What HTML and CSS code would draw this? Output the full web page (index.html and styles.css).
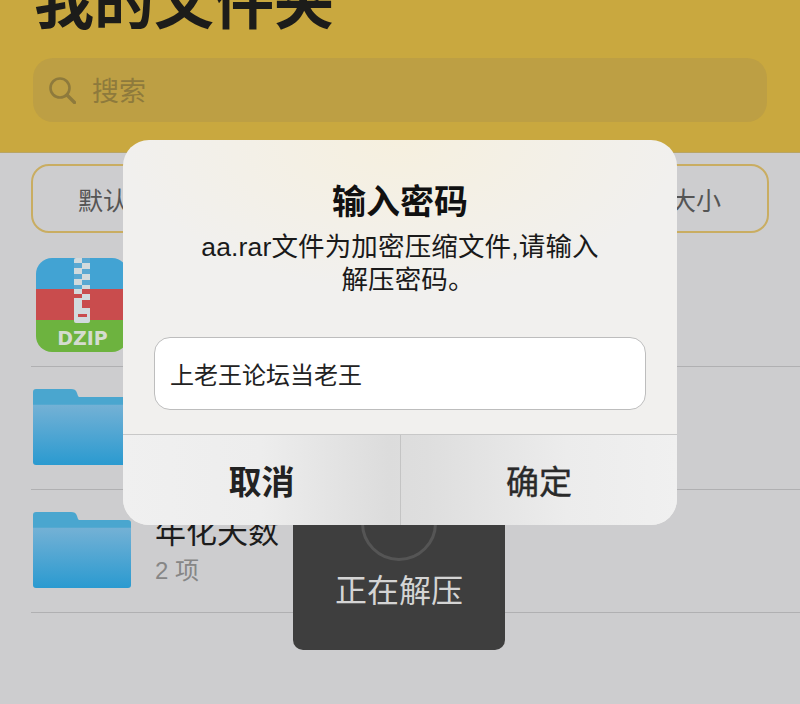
FILE: index.html
```html
<!DOCTYPE html>
<html lang="zh-CN">
<head>
  <meta charset="UTF-8">
  <title>我的文件夹</title>
  <link rel="stylesheet" href="styles.css">
</head>
<body>
  <div class="page">
    <header class="header">
      <h1 class="title">我的文件夹</h1>
      <div class="search">
        <svg class="search-icon" width="27" height="27" viewBox="0 0 27 27" fill="none" stroke="#8e7a3c">
          <circle cx="11" cy="11" r="9.5" stroke-width="2.6"/>
          <path d="M18 18l7.5 7.5" stroke-width="3.4" stroke-linecap="round"/>
        </svg>
        <span class="search-text">搜索</span>
      </div>
    </header>

    <div class="sort-bar">
      <span>默认</span>
      <span>大小</span>
    </div>

    <div class="file-list">
      <div class="file-row">
        <svg class="zip-icon" width="92" height="94" viewBox="0 0 92 94">
          <defs>
            <clipPath id="zip-clip"><rect width="92" height="94" rx="16"/></clipPath>
          </defs>
          <g clip-path="url(#zip-clip)">
            <rect width="92" height="32" fill="#42a3d3"/>
            <rect y="31" width="92" height="32" fill="#c94c4d"/>
            <rect y="62" width="92" height="32" fill="#6db33f"/>
            <rect x="38" width="16" height="65" rx="2" fill="#d2dadd"/>
            <path d="M46 0h8v5h-8zM38 5h8v5h-8zM46 11h8v5h-8zM38 16h8v5h-8zM46 22h8v5h-8zM38 27h8v4h-8z" fill="#5aa8d2"/>
            <path d="M46 31h8v5h-8zM38 36h8v4h-8zM46 42h8v5h-8z" fill="#c94c4d"/>
            <path d="M46 47h8v3h-8z" fill="#c94c4d"/>
            <rect x="42" y="56" width="9" height="3" fill="#c94c4d"/>
            <text class="zip-label" x="46.5" y="87" text-anchor="middle">DZIP</text>
          </g>
        </svg>
      </div>
      <div class="file-row">
        <svg class="folder-icon" width="98" height="76" viewBox="0 0 98 77" preserveAspectRatio="none">
          <use href="#folder-shape"/>
        </svg>
      </div>
      <div class="file-row">
        <svg class="folder-icon" width="98" height="76" viewBox="0 0 98 77" preserveAspectRatio="none">
          <defs>
            <linearGradient id="folder-front" x1="0" y1="0" x2="0" y2="1">
              <stop offset="0" stop-color="#74b1d5"/>
              <stop offset="1" stop-color="#2a9ad0"/>
            </linearGradient>
            <g id="folder-shape">
              <path d="M0 3a3 3 0 0 1 3-3h35c3 0 5 1 6 4l1 3c.4 1 1 1 2 1h48a3 3 0 0 1 3 3v10H0z" fill="#4aa6cf"/>
              <path d="M0 16h98v58a3 3 0 0 1-3 3H3a3 3 0 0 1-3-3z" fill="url(#folder-front)"/>
            </g>
          </defs>
          <use href="#folder-shape"/>
        </svg>
        <div class="file-info">
          <div class="file-name">年化天数</div>
          <div class="file-meta">2 项</div>
        </div>
      </div>
    </div>

    <div class="toast">
      <div class="spinner"></div>
      <div class="toast-text">正在解压</div>
    </div>

    <div class="dialog">
      <div class="dialog-body">
        <h2 class="dialog-title">输入密码</h2>
        <p class="dialog-message">aa.rar文件为加密压缩文件,请输入<br><span class="message-tail">解压密码。</span></p>
        <input class="dialog-input" type="text" value="上老王论坛当老王">
      </div>
      <div class="dialog-actions">
        <button class="dialog-btn cancel">取消</button>
        <button class="dialog-btn confirm">确定</button>
      </div>
    </div>
  </div>
</body>
</html>
```

FILE: styles.css
```css
* { box-sizing: border-box; }

body {
  margin: 0;
  font-family: "Liberation Sans", "Noto Sans CJK SC", sans-serif;
}

.page {
  position: relative;
  width: 800px;
  height: 704px;
  overflow: hidden;
  background-color: #cdcdcf;
}

.header {
  height: 153px;
  padding: 0 33px 30px;
  display: flex;
  flex-direction: column;
  justify-content: flex-end;
  background-color: #c9a83f;
  border-bottom: 1px solid #b9a564;
}

.title {
  margin: 0 0 19px 1px;
  font-size: 60px;
  line-height: 70px;
  font-weight: 700;
  color: #1c1c1a;
  white-space: nowrap;
}

.search {
  height: 64px;
  flex-shrink: 0;
  padding-left: 16px;
  display: flex;
  align-items: center;
  gap: 16px;
  background-color: #bd9f44;
  border-radius: 20px;
  font-size: 27px;
  color: #8e7a3c;
}

.search-text { margin-top: -2px; }

.sort-bar {
  height: 69px;
  margin: 11px 31px 0;
  padding: 0 46px 0 45px;
  display: flex;
  align-items: center;
  justify-content: space-between;
  border: 2px solid #c9ad62;
  border-radius: 18px;
  font-size: 25px;
  color: #555;
}

.file-list { margin: 11px 0 0 31px; }

.file-row {
  height: 123px;
  padding: 0 0 2px 2px;
  display: flex;
  align-items: center;
  gap: 24px;
  border-bottom: 1px solid #b0b0b2;
}

.zip-icon { margin: 2px 0 0 3px; }

.zip-label {
  font-family: "DejaVu Sans", sans-serif;
  font-size: 19px;
  font-weight: 700;
  fill: #d5dcd0;
}

.file-name {
  font-size: 31px;
  line-height: 40px;
  color: #1c1c1c;
}

.file-meta {
  margin-top: 2px;
  font-size: 24px;
  line-height: 32px;
  color: #868686;
}

.toast {
  position: absolute;
  left: 293px;
  top: 490px;
  width: 212px;
  height: 160px;
  display: flex;
  flex-direction: column;
  align-items: center;
  background-color: #3e3e3e;
  border-radius: 10px;
}

.spinner {
  width: 76px;
  height: 76px;
  margin-top: -5px;
  border: 3px solid #555;
  border-radius: 50%;
}

.toast-text {
  margin-top: 8px;
  font-size: 32px;
  line-height: 44px;
  color: #d4d4d4;
}

.dialog {
  position: absolute;
  left: 123px;
  top: 140px;
  width: 554px;
  height: 385px;
  display: flex;
  flex-direction: column;
  border-radius: 26px;
  overflow: hidden;
  background:
    radial-gradient(ellipse 280px 150px at 50% 0, #f6f0df 0%, rgba(246, 240, 223, 0) 100%),
    #f1f0ee;
}

.dialog-body {
  height: 295px;
  padding: 40px 31px 0;
  text-align: center;
  border-bottom: 1px solid #c8c8c8;
}

.dialog-title {
  margin: 0;
  font-size: 34px;
  line-height: 44px;
  font-weight: 700;
  color: #111;
}

.dialog-message {
  margin: 7px 0 0;
  font-size: 26.5px;
  line-height: 33px;
  letter-spacing: 0.15px;
  color: #1a1a1a;
}

.message-tail { padding-left: 16px; }

.dialog-input {
  display: block;
  width: 492px;
  height: 73px;
  margin-top: 40px;
  padding: 0 15px;
  border: 1px solid #bdbdbd;
  border-radius: 16px;
  background-color: #fff;
  font: 24px "Liberation Sans", "Noto Sans CJK SC", sans-serif;
  color: #222;
}

.dialog-actions {
  flex: 1;
  display: grid;
  grid-template-columns: 278px 1fr;
  background: linear-gradient(90deg, #f0f0f0 0%, #ededed 25%, #dcdcdc 48%, #dedede 55%, #ececec 80%, #f0f0f0 100%);
}

.dialog-btn {
  padding: 0;
  border: 0;
  background: none;
  font: 400 33px "Liberation Sans", "Noto Sans CJK SC", sans-serif;
  color: #2a2a2a;
}

.dialog-btn.confirm { -webkit-text-stroke: 0.4px #2a2a2a; }

.dialog-btn.cancel {
  font-weight: 700;
  color: #222;
  border-right: 1px solid #c4c4c4;
}
```
